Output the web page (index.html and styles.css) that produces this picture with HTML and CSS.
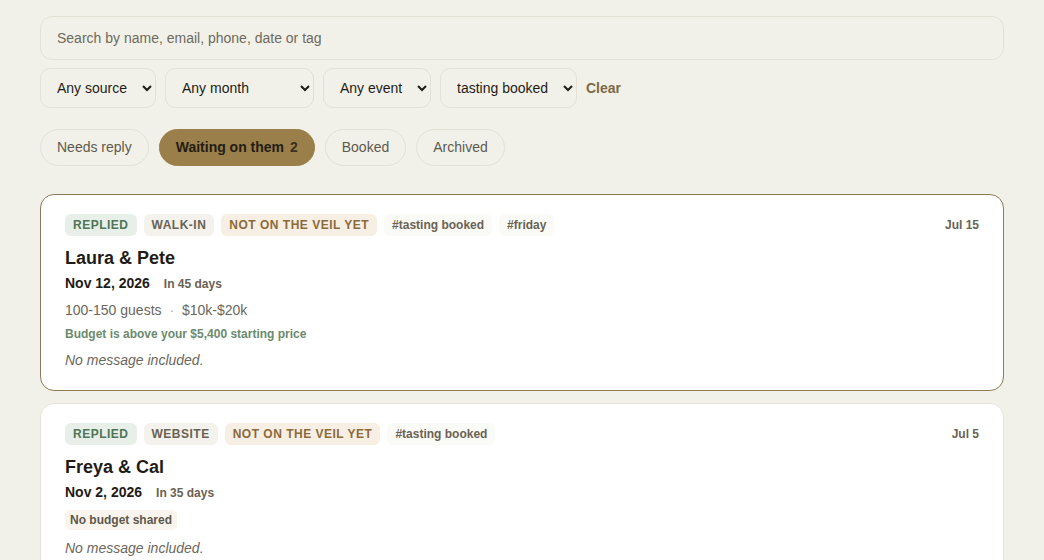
FILE: index.html
```html
<!DOCTYPE html>
<html lang="en">
<head>
<meta charset="utf-8">
<title>Inquiries</title>
<link rel="stylesheet" href="styles.css">
</head>
<body>
<main class="inbox">
  <input class="search" type="text" placeholder="Search by name, email, phone, date or tag">

  <div class="filters">
    <select class="filter">
      <option>Any source</option>
      <option>Website</option>
      <option>Walk-in</option>
      <option>Referral</option>
    </select>
    <select class="filter">
      <option>Any month</option>
      <option>September 2026</option>
      <option>October 2026</option>
      <option>November 2026</option>
    </select>
    <select class="filter">
      <option>Any event</option>
      <option>Wedding</option>
      <option>Shower</option>
      <option>Party</option>
    </select>
    <select class="filter">
      <option>Any tag</option>
      <option selected>tasting booked</option>
      <option>friday</option>
    </select>
    <button class="clear" type="button">Clear</button>
  </div>

  <nav class="tabs">
    <button class="tab" type="button">Needs reply</button>
    <button class="tab tab--active" type="button">Waiting on them <span class="tab-count">2</span></button>
    <button class="tab" type="button">Booked</button>
    <button class="tab" type="button">Archived</button>
  </nav>

  <section class="list">
    <article class="card card--selected">
      <header class="card-top">
        <div class="tags">
          <span class="tag tag--status">Replied</span>
          <span class="tag tag--source">Walk-in</span>
          <span class="tag tag--veil">Not on the veil yet</span>
          <span class="tag tag--hash">#tasting booked</span>
          <span class="tag tag--hash">#friday</span>
        </div>
        <span class="received">Jul 15</span>
      </header>
      <h2 class="couple">Laura &amp; Pete</h2>
      <p class="event-date">Nov 12, 2026<span class="countdown">In 45 days</span></p>
      <p class="details">100-150 guests <span class="dot">·</span> $10k-$20k</p>
      <p class="fit">Budget is above your $5,400 starting price</p>
      <p class="message">No message included.</p>
    </article>

    <article class="card">
      <header class="card-top">
        <div class="tags">
          <span class="tag tag--status">Replied</span>
          <span class="tag tag--source">Website</span>
          <span class="tag tag--veil">Not on the veil yet</span>
          <span class="tag tag--hash">#tasting booked</span>
        </div>
        <span class="received">Jul 5</span>
      </header>
      <h2 class="couple">Freya &amp; Cal</h2>
      <p class="event-date">Nov 2, 2026<span class="countdown">In 35 days</span></p>
      <p class="budget-chip">No budget shared</p>
      <p class="message">No message included.</p>
    </article>
  </section>
</main>
</body>
</html>
```

FILE: styles.css
```css
* {
  box-sizing: border-box;
}

html,
body {
  margin: 0;
  background: #f2f1e9;
}

body {
  font-family: "Liberation Sans", Arial, sans-serif;
  color: #1f1c17;
  padding: 16px 40px 24px;
}

.inbox {
  display: flex;
  flex-direction: column;
}

.search {
  width: 100%;
  height: 44px;
  padding: 0 16px;
  border: 1px solid #e3e1d5;
  border-radius: 12px;
  background: #f2f1e9;
  font: 14px "Liberation Sans", Arial, sans-serif;
  color: #1f1c17;
  outline: none;
}

.search::placeholder {
  color: #6e6a5e;
}

.filters {
  display: flex;
  align-items: center;
  gap: 9px;
  margin-top: 8px;
}

.filter {
  height: 40px;
  padding: 0 11px 0 12px;
  border: 1px solid #e3e1d5;
  border-radius: 10px;
  background: #f2f1e9;
  font: 14px "Liberation Sans", Arial, sans-serif;
  color: #1f1c17;
}

.clear {
  border: 0;
  background: none;
  padding: 0;
  font: bold 14px "Liberation Sans", Arial, sans-serif;
  color: #7d6a45;
  cursor: pointer;
}

.tabs {
  display: flex;
  gap: 10px;
  margin-top: 21px;
}

.tab {
  height: 37px;
  padding: 0 16px 1px;
  border: 1px solid #e3e1d5;
  border-radius: 999px;
  background: #f2f1e9;
  font: 14px "Liberation Sans", Arial, sans-serif;
  color: #5e594d;
  cursor: pointer;
}

.tab--active {
  background: #9b7f4b;
  border-color: #9b7f4b;
  color: #231d12;
  font-weight: bold;
}

.tab-count {
  margin-left: 2px;
  color: #3b311f;
}

.list {
  display: flex;
  flex-direction: column;
  gap: 12px;
  margin-top: 28px;
}

.card {
  background: #ffffff;
  border: 1px solid #e6e4d9;
  border-radius: 14px;
  padding: 19px 24px 21px;
}

.card--selected {
  border-color: #8d7c57;
}

.card p,
.card h2 {
  margin: 0;
}

.card-top {
  display: flex;
  justify-content: space-between;
  align-items: center;
}

.tags {
  display: flex;
  flex-wrap: wrap;
  gap: 7px;
}

.tag {
  height: 22px;
  display: inline-flex;
  align-items: center;
  padding: 0 8px;
  border-radius: 6px;
  font-size: 12px;
  font-weight: bold;
  text-transform: uppercase;
  letter-spacing: 0.5px;
}

.tag--status {
  background: #e7efe8;
  color: #4f7556;
}

.tag--source {
  background: #f4f2ec;
  color: #6a6253;
}

.tag--veil {
  background: #f8efe4;
  color: #8b6a3b;
}

.tag--hash {
  background: #fafaf6;
  color: #6a6253;
  text-transform: none;
  letter-spacing: 0;
}

.received {
  font-size: 12px;
  font-weight: bold;
  color: #6a6253;
}

.couple {
  margin-top: 11px !important;
  font-size: 18px;
  line-height: 23px;
  font-weight: bold;
  color: #1f1c17;
}

.event-date {
  margin-top: 4px !important;
  font-size: 14px;
  line-height: 18px;
  font-weight: bold;
  color: #1f1c17;
}

.countdown {
  margin-left: 14px;
  font-size: 12px;
  color: #6a6253;
}

.details {
  margin-top: 8px !important;
  font-size: 14px;
  line-height: 18px;
  color: #6a675d;
}

.dot {
  margin: 0 4px;
  color: #b5b1a4;
}

.fit {
  margin-top: 7px !important;
  font-size: 12px;
  line-height: 16px;
  font-weight: bold;
  color: #6b8a6e;
}

.budget-chip {
  align-self: flex-start;
  display: inline-block;
  margin-top: 8px !important;
  padding: 0 5px;
  height: 20px;
  line-height: 20px;
  border-radius: 5px;
  background: #f9f5ee;
  font-size: 12px;
  font-weight: bold;
  color: #5e584c;
}

.message {
  margin-top: 9px !important;
  font-size: 14px;
  line-height: 18px;
  font-style: italic;
  color: #6a675d;
}
```
